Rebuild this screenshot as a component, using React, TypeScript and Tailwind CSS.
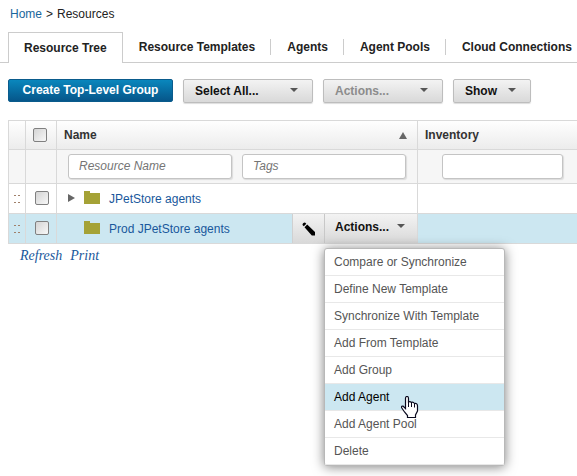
import type { ReactNode } from "react";

const MENU_ITEMS = [
  "Compare or Synchronize",
  "Define New Template",
  "Synchronize With Template",
  "Add From Template",
  "Add Group",
  "Add Agent",
  "Add Agent Pool",
  "Delete",
];

const TABS = ["Resource Templates", "Agents", "Agent Pools", "Cloud Connections"];

const CELL = "border-t border-l border-[#d9d9d9] p-0 font-normal align-middle";
const FIELD =
  "h-[25px] rounded-[3px] border border-[#c4c4c4] bg-white px-2.5 text-[12px] italic shadow-[1px_1px_1px_#dcdcdc] outline-none placeholder:text-[#757575]";

function Caret({ className = "" }: { className?: string }) {
  return (
    <svg width="8" height="4" viewBox="0 0 8 4" className={className} aria-hidden="true">
      <path d="M0 0h8L4 4z" fill="#555" />
    </svg>
  );
}

function MenuButton({ label, className, disabled = false }: { label: string; className: string; disabled?: boolean }) {
  return (
    <button
      type="button"
      aria-haspopup="menu"
      disabled={disabled}
      className={`flex h-6 shrink-0 items-center justify-between rounded-[2px] border border-[#bdbdbd] bg-linear-to-b from-[#f3f3f3] to-[#d9d9d9] pr-3.5 pl-[11px] font-bold shadow-[0_1px_1px_#ddd] ${disabled ? "text-[#8c8c8c]" : "text-[#111]"} ${className}`}
    >
      {label}
      <Caret className="mb-0.5" />
    </button>
  );
}

function Check({ label }: { label: string }) {
  return (
    <input
      type="checkbox"
      aria-label={label}
      className="block size-3.5 appearance-none rounded-[2px] border border-[#808080] bg-linear-to-br from-[#d4d4d4] to-[#f8f8f8]"
    />
  );
}

function Grip() {
  return (
    <svg width="8" height="8" viewBox="0 0 8 8" className="ml-[5px]" aria-hidden="true">
      <path d="M0 0h2v1H0zM4 0h2v1H4zM0 7h2v1H0zM4 7h2v1H4z" fill="#a0806a" />
    </svg>
  );
}

function Folder() {
  return (
    <svg width="16" height="13" viewBox="0 0 16 13" className="mb-0.5 shrink-0" aria-hidden="true">
      <path d="M0 0h6v2h10v11H0z" fill="#a5a236" />
    </svg>
  );
}

function Row({
  name,
  selected = false,
  expandable = false,
  children,
}: {
  name: string;
  selected?: boolean;
  expandable?: boolean;
  children?: ReactNode;
}) {
  return (
    <tr className={`h-[30px] ${selected ? "bg-[#cce7f1]" : "bg-white"}`}>
      <td className={CELL}>
        <Grip />
      </td>
      <td className={CELL}>
        <div className="pb-0.5 pl-[9px]">
          <Check label={`Select ${name}`} />
        </div>
      </td>
      <td className={CELL}>
        <div className="flex h-[29px] items-center">
          <span className="w-[27px] shrink-0 pb-0.5 pl-[11px]">
            {expandable && (
              <button type="button" aria-label={`Expand ${name}`} className="block">
                <svg width="7" height="8" viewBox="0 0 7 8" aria-hidden="true">
                  <path d="M0 0l7 4-7 4z" fill="#666" />
                </svg>
              </button>
            )}
          </span>
          <Folder />
          <a href="#resource" className="ml-[9px] grow text-[#19589c]">
            {name}
          </a>
          {children}
        </div>
      </td>
      <td className={CELL} />
    </tr>
  );
}

function Hand() {
  return (
    <svg width="18" height="23" viewBox="0 0 18 23" className="absolute top-[147px] left-[76px]" aria-hidden="true">
      <path
        d="M4.500 2.500Q4.500.5 6 .5T7.500 2.500V6Q9 5 10.500 6.500 12 5.500 13.500 7.500 16.500 7 16.500 10V15L14.500 19V21.500H6.500V19.500L3.500 16 .5 11.500Q.5 9.800 2 10L4.500 12.500Z"
        fill="#fff"
        stroke="#0a0a1e"
        strokeWidth="1.200"
      />
      <path d="M7.500 5.500V11M10.500 6.500V11M13.500 7.500V11.500" stroke="#0a0a1e" fill="none" />
    </svg>
  );
}

function ActionsMenu() {
  return (
    <div
      role="menu"
      className="absolute top-[34px] left-0 z-10 w-[181px] rounded-[3px] border border-[#b8b8b8] bg-white shadow-[0_1px_12px_rgba(0,0,0,0.5)]"
    >
      {MENU_ITEMS.map((item) => (
        <button
          key={item}
          type="button"
          role="menuitem"
          className={`block h-[27px] w-full border-b border-[#e8e8e8] px-[9px] text-left last:h-[26px] last:border-b-0 ${item === "Add Agent" ? "bg-[#cce7f1] text-black" : "text-[#555]"}`}
        >
          {item}
        </button>
      ))}
      <Hand />
    </div>
  );
}

export default function App() {
  return (
    <div className="min-h-screen overflow-hidden bg-white font-['Liberation_Sans',Arial,sans-serif] text-[12px] leading-4 text-[#222]">
      <nav aria-label="Breadcrumb" className="flex gap-1 px-2.5 pt-1.5">
        <a href="#home" className="text-[#19669c]">
          Home
        </a>
        <span>&gt;</span>
        <span>Resources</span>
      </nav>

      <nav aria-label="Sections" className="mt-2.5 flex h-[31px] font-bold whitespace-nowrap">
        <span className="w-2 shrink-0 border-b border-[#ccc]" />
        <a href="#tree" aria-current="page" className="flex shrink-0 items-center border-x border-t border-[#ccc] px-[15px]">
          Resource Tree
        </a>
        <div className="flex grow items-center border-b border-[#ccc]">
          {TABS.map((tab) => (
            <a key={tab} href="#tab" className="border-r border-[#ccc] pr-[15px] pl-4 last:border-r-0">
              {tab}
            </a>
          ))}
        </div>
      </nav>

      <div className="mt-4 flex items-start gap-2.5 px-2">
        <button
          type="button"
          className="h-[23px] w-[165px] shrink-0 rounded-[2px] border border-[#0a5b8c] bg-linear-to-b from-[#0a87bd] to-[#06568a] pb-0.5 font-bold whitespace-nowrap text-white"
        >
          Create Top-Level Group
        </button>
        <MenuButton label="Select All..." className="w-[130px]" />
        <MenuButton label="Actions..." className="w-[120px]" disabled />
        <MenuButton label="Show" className="w-[78px]" />
      </div>

      <div className="mt-[17px] pl-2">
        <table className="w-full table-fixed border-separate border-spacing-0 border-b border-[#d9d9d9] text-left">
          <colgroup>
            <col className="w-[17px]" />
            <col className="w-[31px]" />
            <col className="w-[361px]" />
            <col />
          </colgroup>
          <thead>
            <tr className="h-[29px] bg-linear-to-b from-white to-[#ececec] text-[#333]">
              <th className={CELL} />
              <th className={CELL}>
                <div className="pl-[7px]">
                  <Check label="Select all resources" />
                </div>
              </th>
              <th className={CELL}>
                <div className="flex items-center justify-between pr-2.5 pl-[7px] font-bold">
                  Name
                  <svg width="8" height="7" viewBox="0 0 8 7" aria-hidden="true">
                    <path d="M4 0l4 7H0z" fill="#666" />
                  </svg>
                </div>
              </th>
              <th className={CELL}>
                <div className="pl-[7px] font-bold">Inventory</div>
              </th>
            </tr>
            <tr className="h-[34px] bg-[#f6f6f6]">
              <td className={CELL} />
              <td className={CELL} />
              <td className={CELL}>
                <div className="flex gap-2.5 pr-[11px] pb-px pl-[11px]">
                  <input aria-label="Resource Name" placeholder="Resource Name" className={`min-w-0 flex-1 ${FIELD}`} />
                  <input aria-label="Tags" placeholder="Tags" className={`min-w-0 flex-1 ${FIELD}`} />
                </div>
              </td>
              <td className={CELL}>
                <div className="flex pr-3.5 pb-px pl-6">
                  <input aria-label="Inventory" className={`min-w-0 flex-1 ${FIELD}`} />
                </div>
              </td>
            </tr>
          </thead>
          <tbody>
            <Row name="JPetStore agents" expandable />
            <Row name="Prod JPetStore agents" selected>
              <button
                type="button"
                aria-label="Edit"
                className="flex h-full w-8 shrink-0 items-center justify-center border-l border-[#d0d0d0] bg-linear-to-b from-[#f3f3f3] to-[#d9d9d9]"
              >
                <svg width="14" height="14" viewBox="0 0 14 14" aria-hidden="true">
                  <path d="M.5 3Q.5.5 3 .5L4.300 1.800 1.800 4.300ZM2.500 5.200L5.200 2.500 13 10V13.500H9.800Z" fill="#000" />
                </svg>
              </button>
              <div className="relative h-full w-[93px] shrink-0">
                <button
                  type="button"
                  aria-haspopup="menu"
                  aria-expanded="true"
                  className="flex h-full w-full items-center justify-between border-l border-[#c8c8c8] bg-linear-to-b from-[#f3f3f3] to-[#d9d9d9] pr-3 pb-[3px] pl-2.5 font-bold text-[#111]"
                >
                  Actions...
                  <Caret className="mb-0.5" />
                </button>
                <ActionsMenu />
              </div>
            </Row>
          </tbody>
        </table>
      </div>

      <div className="mt-1 flex gap-2 px-5 font-['Liberation_Serif',serif] text-[14px] text-[#19589c] italic">
        <a href="#refresh">Refresh</a>
        <a href="#print">Print</a>
      </div>
    </div>
  );
}
